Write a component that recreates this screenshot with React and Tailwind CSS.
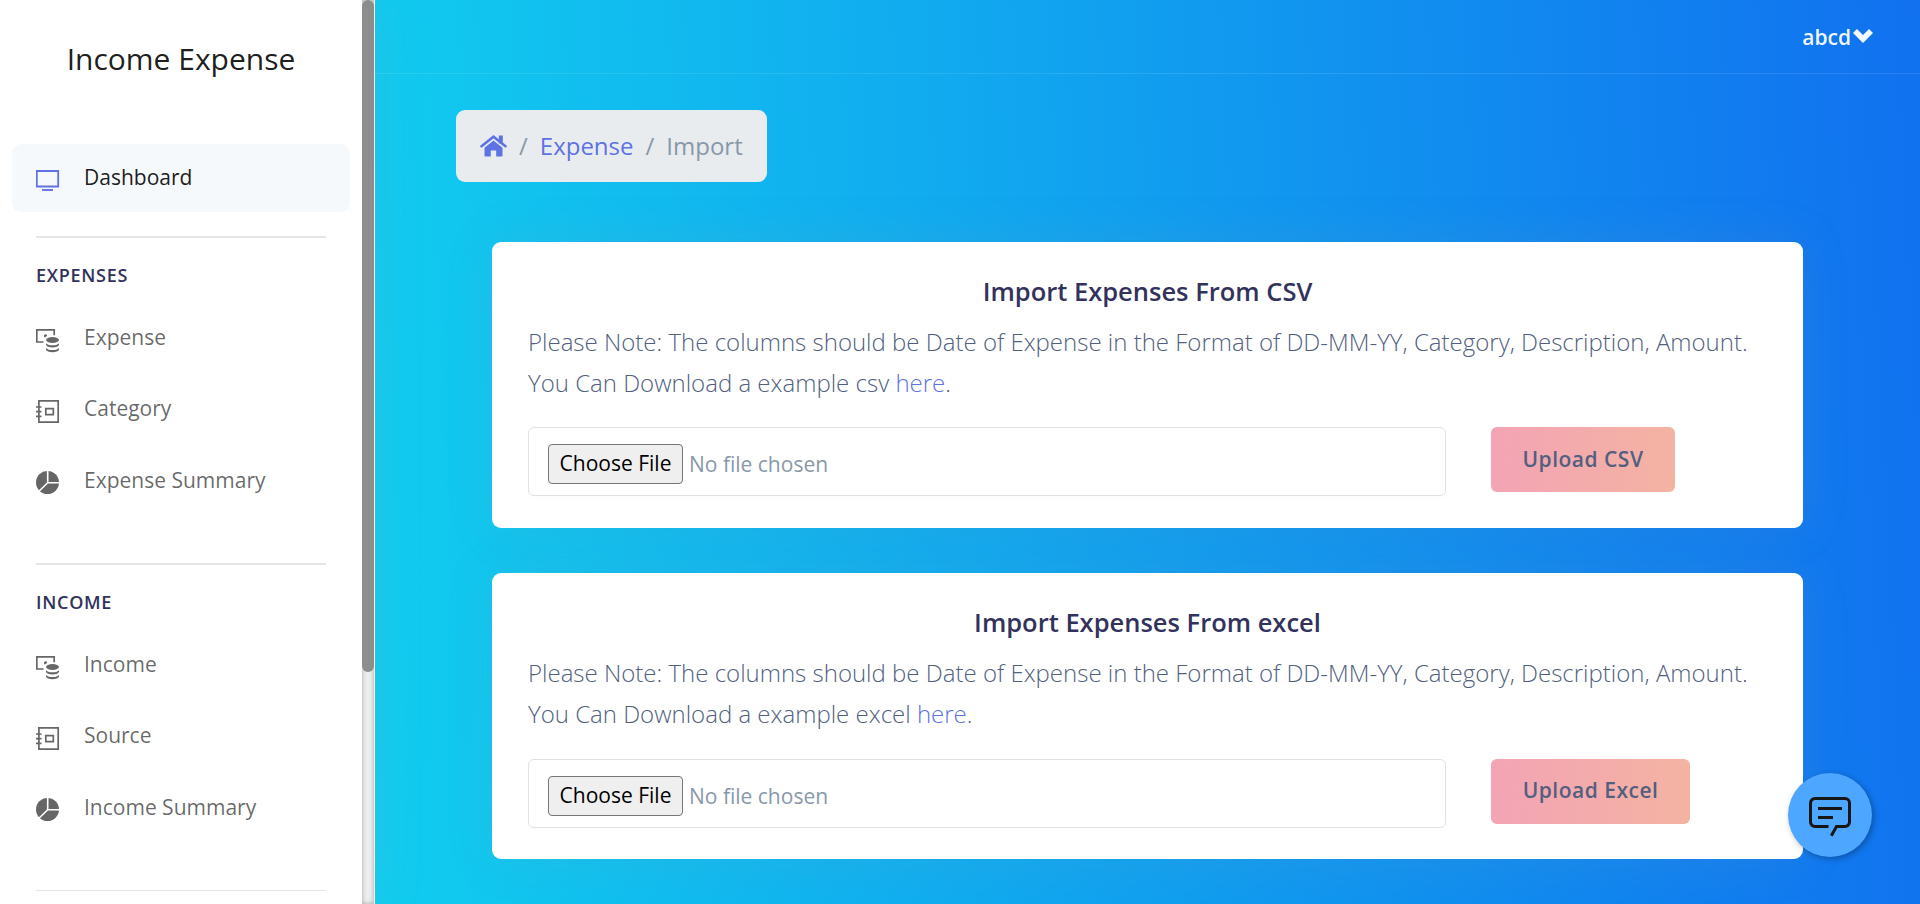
import React from "react";

const icons = {
  tv: (
    <svg width="24" height="24" viewBox="0 0 24 24" fill="none" className="shrink-0">
      <path d="M0.8 1h21.4v15.5H0.8z" stroke="#5e72e4" strokeWidth="1.8" />
      <path d="M6 20h11" stroke="#5e72e4" strokeWidth="1.9" />
    </svg>
  ),
  coins: (
    <svg width="24" height="24" viewBox="0 0 24 24" fill="none" className="shrink-0">
      <path d="M7.5 13H0.8V0.9h17.4v5.3" stroke="#666" strokeWidth="1.7" />
      <path d="M8 6.5a2 2 0 0 1 3-.8v1.3L8.8 8.5A2 2 0 0 1 8 6.5z" fill="#666" />
      <ellipse cx="16.5" cy="11" rx="6.5" ry="2.9" fill="#666" />
      <path d="M10 14.2c1.500 1.700 4 2.100 6.500 2.100s5-.4 6.500-2.100v1.500c-.4 1.700-3.200 2.700-6.500 2.700s-6.100-1-6.500-2.700z" fill="#666" />
      <path d="M10 19c1.500 1.700 4 2.100 6.500 2.100s5-.4 6.500-2.100v1.500c-.4 1.700-3.200 2.700-6.500 2.700s-6.100-1-6.500-2.700z" fill="#666" />
    </svg>
  ),
  book: (
    <svg width="24" height="24" viewBox="0 0 24 24" fill="none" stroke="#666" strokeWidth="1.7" className="shrink-0">
      <path d="M2.900 0.900h19.300v21.300H2.900z" />
      <path d="M9.800 8.700h7.500v6H9.800zM0 7h5.500M0 11.600h5.500M0 16.300h5.500" />
    </svg>
  ),
  pie: (
    <svg width="24" height="24" viewBox="0 0 24 24" fill="none" className="shrink-0">
      <circle cx="11.500" cy="11.500" r="11.500" fill="#666" />
      <path d="M11.700 0v11.700H24M11.700 11.700L3 20.200" stroke="#fff" strokeWidth="1.600" />
    </svg>
  ),
};

function Item({ icon, label }) {
  return (
    <a className="flex h-[71.400px] items-center pl-9 text-[21px] text-black/60">
      <span className="mt-[6.500px] w-12">{icons[icon]}</span>
      <span className="mt-px">{label}</span>
    </a>
  );
}

function Section({ title, items }) {
  return (
    <section className="h-[327px]">
      <hr className="mx-9 w-[290px] border-t-2 border-black/10" />
      <h6 className="mt-[24px] pl-9 text-[18px] font-semibold leading-[27px] tracking-[0.72px] text-[#32325d]">{title}</h6>
      <div className="mt-[12.600px]">
        {items.map(([icon, label]) => (
          <Item key={label} icon={icon} label={label} />
        ))}
      </div>
    </section>
  );
}

function Sidebar() {
  return (
    <nav className="z-10 flex h-full w-[375px] shrink-0 overflow-hidden bg-white shadow-[0_0_48px_0_rgba(136,152,170,0.15)]">
      <div className="w-[362px]">
        <div className="flex h-[116px] items-center justify-center text-[30px] text-black/90">Income Expense</div>
        <a className="mx-3 mt-7 flex h-[68px] items-center rounded-[9px] bg-[#f6f9fc] pl-6 text-[21px] text-black/90">
          <span className="mt-[7px] w-12">{icons.tv}</span>
          <span>Dashboard</span>
        </a>
        <div className="mt-6">
          <Section title="EXPENSES" items={[["coins", "Expense"], ["book", "Category"], ["pie", "Expense Summary"]]} />
          <Section title="INCOME" items={[["coins", "Income"], ["book", "Source"], ["pie", "Income Summary"]]} />
          <hr className="mx-9 w-[290px] border-t border-black/10" />
        </div>
      </div>
      <div className="h-full w-3 bg-[#eee] shadow-[inset_0_0_5px_rgba(0,0,0,0.3)]">
        <div className="h-[672px] rounded-[6px] bg-[#8d8d8d]" />
      </div>
    </nav>
  );
}

function ImportCard({ title, kind, button, width }) {
  return (
    <section className="h-[285.500px] rounded-[9px] bg-white px-9 pt-[33px] shadow-[0_0_48px_0_rgba(136,152,170,0.15)]">
      <h3 className="text-center text-[25.500px] font-semibold leading-[33px] text-[#32325d]">{title}</h3>
      <p className="mt-[14px] whitespace-nowrap text-[24px] font-light leading-[40.800px] text-[#525f7f]">
        Please Note: The columns should be Date of Expense in the Format of DD-MM-YY, Category, Description, Amount.
        <br />
        You Can Download a example {kind} <a className="text-[#5e72e4]">here</a>.
      </p>
      <div className="mt-[23.800px] flex gap-[45px]">
        <div className="flex h-[69px] w-[918px] items-start rounded-[6px] border border-[#dee2e6] pl-[19px] pt-4 shadow-[0_3px_3px_rgba(0,0,0,0.01)]">
          <button className="flex h-10 w-[135px] justify-center whitespace-nowrap rounded-[4px] border border-[#767676] bg-[#efefef] text-[21px] leading-[36px] text-black">Choose File</button>
          <span className="ml-[6px] text-[21px] leading-10 text-[#8898aa]">No file chosen</span>
        </div>
        <button className={`${width} h-[65px] rounded-[6px] bg-linear-[87deg,#f3a4b5,#f4b3a2] text-[21px] font-semibold tracking-[0.500px] text-[#525f7f]`}>{button}</button>
      </div>
    </section>
  );
}

export default function App() {
  return (
    <div className="relative flex h-[904px] w-[1920px] overflow-hidden bg-white font-['Open_Sans',sans-serif]">
      <Sidebar />
      <main className="h-full flex-1 bg-linear-[87deg,#11cdef,#1171ef]">
        <header className="flex h-[74px] items-center justify-end border-b border-white/10 pr-[47px] text-[21px] font-semibold text-white/95">
          <span className="mt-[2px]">abcd</span>
          <svg width="20" height="15" viewBox="0 0 20 15" fill="none" className="ml-[2px] -mt-[2px]">
            <path d="M2 3l8 8 8-8" stroke="currentColor" strokeWidth="5.600" />
          </svg>
        </header>
        <nav className="ml-[81px] mt-9 flex h-[72px] w-[311px] items-center rounded-[9px] bg-[#e9ecef] pl-6 text-[24px] text-[#8898aa]">
          <svg width="27" height="22" viewBox="0 0 27 22" fill="none" className="shrink-0">
            <path d="M18.800 0.500h4v8h-4z" fill="#5e72e4" />
            <path d="M1.500 11.200L13.500 1.700l12 9.500" stroke="#5e72e4" strokeWidth="2.600" strokeLinecap="round" />
            <path d="M13.500 5.500l9 7.300v7.700a1 1 0 0 1-1 1h-5.300v-6h-5.400v6H5.500a1 1 0 0 1-1-1v-7.700z" fill="#5e72e4" />
          </svg>
          <span className="ml-3">/</span>
          <a className="ml-3 text-[#5e72e4]">Expense</a>
          <span className="ml-3">/</span>
          <span className="ml-3">Import</span>
        </nav>
        <div className="ml-[117px] mt-[60px] flex w-[1311px] flex-col gap-[45.800px]">
          <ImportCard title="Import Expenses From CSV" kind="csv" button="Upload CSV" width="w-[184px]" />
          <ImportCard title="Import Expenses From excel" kind="excel" button="Upload Excel" width="w-[199px]" />
        </div>
      </main>
      <button className="absolute left-[1788px] top-[773px] z-20 flex size-[84px] items-center justify-center rounded-full bg-[#4da6ff] shadow-[2px_2px_6px_rgba(0,0,0,0.3)]">
        <svg width="42" height="40" viewBox="0 0 42 40" fill="none" stroke="#161616" strokeWidth="3" className="mt-1">
          <path d="M19.500 29.500H6a4.500 4.500 0 0 1-4.500-4.500V6A4.500 4.500 0 0 1 6 1.500h30A4.500 4.500 0 0 1 40.500 6v19a4.500 4.500 0 0 1-4.500 4.500h-8.500l-5.200 9.300M9 11.500h24M9 20.500h15" />
        </svg>
      </button>
    </div>
  );
}
